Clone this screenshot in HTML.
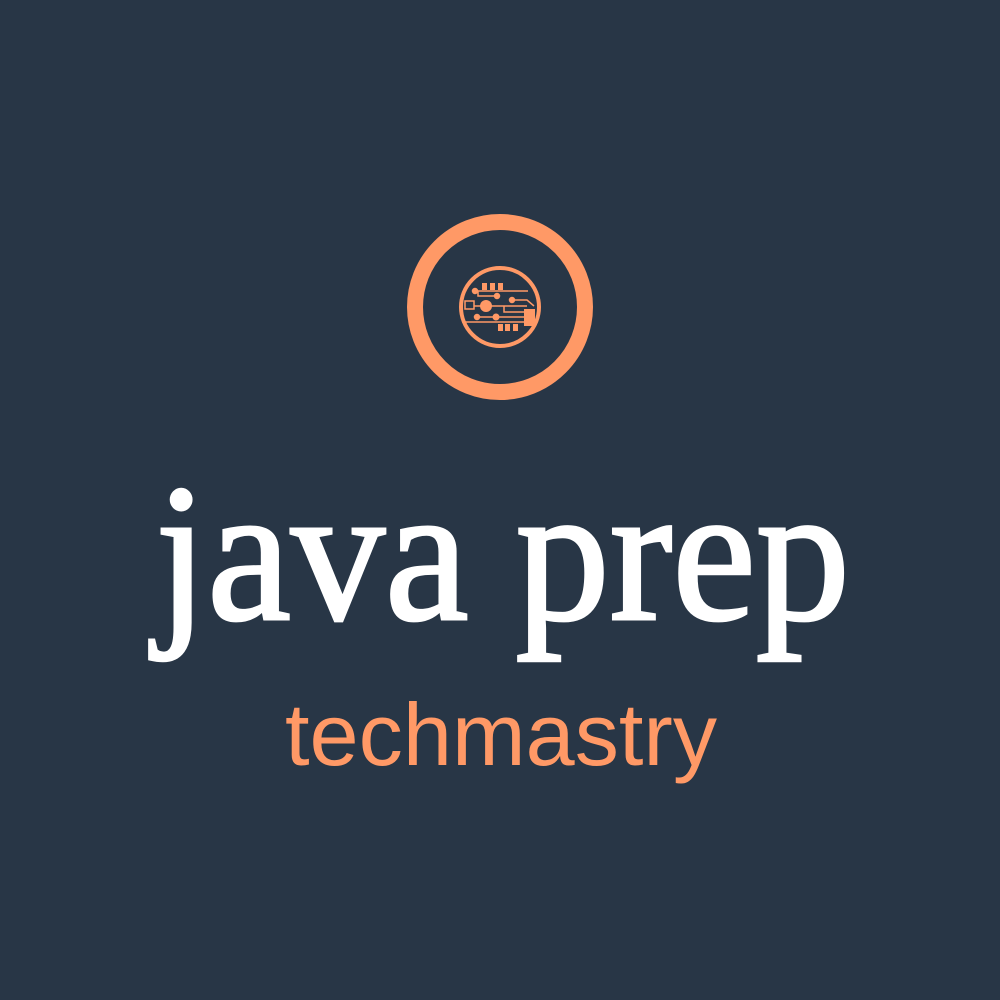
<!DOCTYPE html>
<html><head><style>html,body{margin:0;padding:0;background:#283646;}svg{display:block}</style></head>
<body>
<svg width="1000" height="1000" viewBox="0 0 1000 1000" xmlns="http://www.w3.org/2000/svg">
<rect width="1000" height="1000" fill="#283646"/>
<g fill="none" stroke="#ff9966">
<circle cx="500" cy="307" r="85" stroke-width="16"/>
<circle cx="500" cy="307" r="39" stroke-width="4"/>
</g>
<g fill="#ff9966" stroke="#ff9966" stroke-width="1.5">
<rect x="482" y="283" width="5" height="7" stroke="none"/>
<rect x="490" y="283" width="5" height="7" stroke="none"/>
<rect x="498" y="283" width="5" height="7" stroke="none"/>
<circle cx="475" cy="291" r="2.5"/>
<line x1="475" y1="291" x2="528" y2="291"/>
<polyline points="478,291 478,296 497,296" fill="none"/>
<circle cx="497" cy="296" r="2.5"/>
<circle cx="486" cy="306" r="6" stroke="none"/>
<rect x="465" y="301" width="9" height="8" fill="none"/>
<line x1="474" y1="306" x2="527" y2="306"/>
<circle cx="512" cy="300" r="2.5"/>
<polyline points="512,300 527,300 534,306" fill="none"/>
<polyline points="504,306 504,312 525,312" fill="none"/>
<rect x="524" y="309" width="11" height="17" stroke="none"/>
<circle cx="477" cy="317" r="2.5"/>
<circle cx="496" cy="317" r="3.5" stroke="none"/>
<line x1="477" y1="317" x2="524" y2="317"/>
<line x1="462" y1="322" x2="524" y2="322"/>
<rect x="498" y="324" width="5" height="7" stroke="none"/>
<rect x="505" y="324" width="5" height="7" stroke="none"/>
<rect x="513" y="324" width="5" height="7" stroke="none"/>
</g>
<text x="155" y="619" font-family="Liberation Serif, serif" font-size="196" fill="#ffffff" stroke="#ffffff" stroke-width="3" textLength="695" lengthAdjust="spacingAndGlyphs">java prep</text>
<text x="285" y="765" font-family="Liberation Sans, sans-serif" font-size="88" fill="#ff9966" textLength="432" lengthAdjust="spacingAndGlyphs">techmastry</text>
</svg>
</body></html>
